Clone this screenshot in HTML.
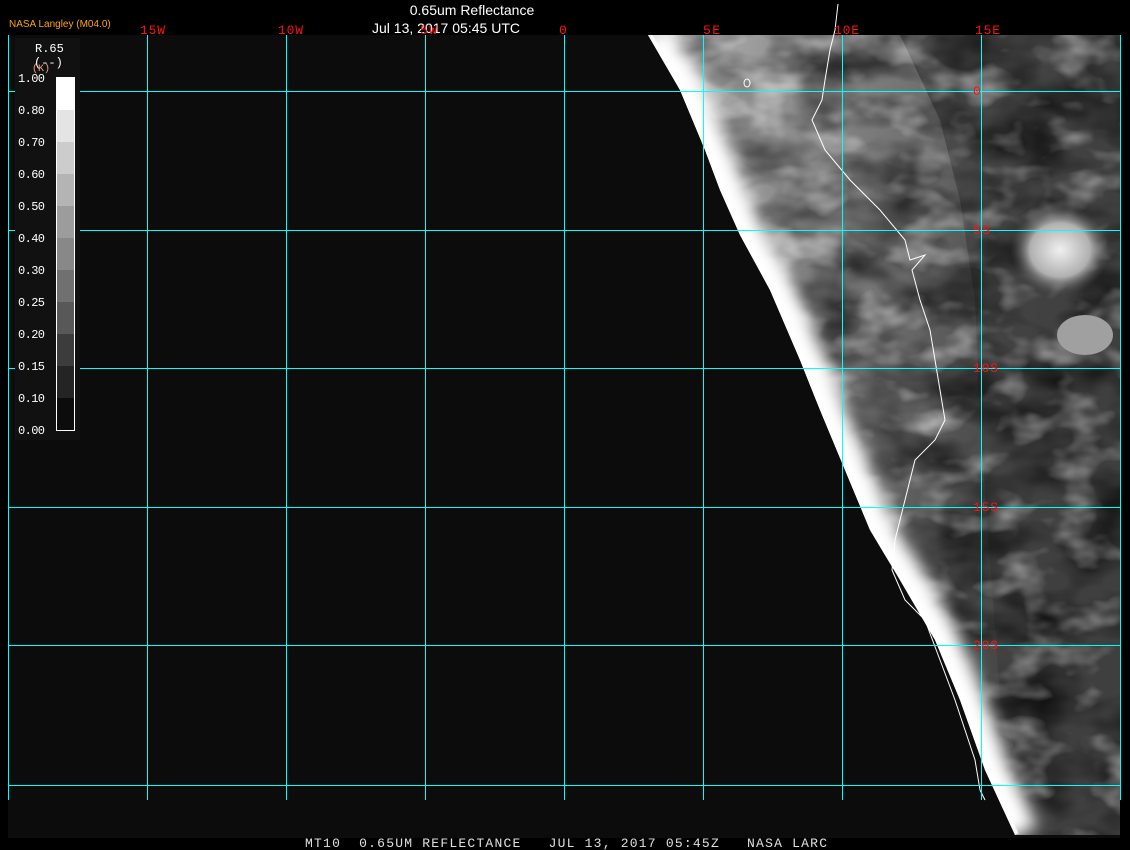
<!DOCTYPE html>
<html><head><meta charset="utf-8"><style>
html,body{margin:0;padding:0;background:#000;width:1130px;height:850px;overflow:hidden}
svg{display:block}
.m{font-family:"Liberation Mono","DejaVu Sans Mono",monospace}
</style></head><body>
<svg width="1130" height="850" viewBox="0 0 1130 850" xmlns="http://www.w3.org/2000/svg">
<defs>
<clipPath id="land"><polygon points="648,35 680,90 705,150 720,190 740,235 770,290 800,360 820,410 845,470 870,530 900,580 935,640 960,700 985,770 1015,835 1120,835 1120,35"/></clipPath>
<filter id="noise" x="0" y="0" width="100%" height="100%">
<feTurbulence type="fractalNoise" baseFrequency="0.015 0.025" numOctaves="3" seed="3"/>
<feColorMatrix type="matrix" values="0 0 0 0 0  0 0 0 0 0  0 0 0 0 0  1.3 0 0 0 -0.45"/>
</filter>
<filter id="noiseW" x="0" y="0" width="100%" height="100%">
<feTurbulence type="fractalNoise" baseFrequency="0.02 0.03" numOctaves="3" seed="11"/>
<feColorMatrix type="matrix" values="0 0 0 0 1  0 0 0 0 1  0 0 0 0 1  1.2 0 0 0 -0.6"/>
</filter>
<filter id="bl"><feGaussianBlur stdDeviation="8"/></filter>
<linearGradient id="band" x1="0" y1="0" x2="1" y2="0.25">
<stop offset="0" stop-color="#e0e0e0"/>
<stop offset="0.1" stop-color="#b0b0b0"/>
<stop offset="0.3" stop-color="#909090"/>
<stop offset="0.55" stop-color="#727272"/>
<stop offset="0.75" stop-color="#505050"/>
<stop offset="1" stop-color="#404040"/>
</linearGradient>
<radialGradient id="cl" cx="0.5" cy="0.5" r="0.5">
<stop offset="0" stop-color="#f0f0f0"/><stop offset="0.6" stop-color="#b0b0b0"/><stop offset="1" stop-color="#555" stop-opacity="0"/>
</radialGradient>
</defs>
<rect x="8" y="35" width="1112" height="803" fill="#0c0c0c"/>
<g clip-path="url(#land)">
<rect x="640" y="35" width="480" height="800" fill="url(#band)"/>
<polygon points="900,35 1120,35 1120,835 1040,835 1000,700 990,560 980,420 975,300 960,200 940,120" fill="#3e3e3e" opacity="0.7"/>
<rect x="640" y="35" width="480" height="800" filter="url(#noise)"/>
<rect x="640" y="35" width="480" height="800" filter="url(#noiseW)"/>
<polyline points="648,35 680,90 705,150 720,190 740,235 770,290 800,360 820,410 845,470 870,530 900,580 935,640 960,700 985,770 1015,835" fill="none" stroke="#fff" stroke-width="40" filter="url(#bl)" transform="translate(4,0)"/>
<polyline points="648,35 680,90 705,150 720,190 740,235 770,290 800,360 820,410 845,470 870,530 900,580 935,640 960,700 985,770 1015,835" fill="none" stroke="#fff" stroke-width="8" opacity="0.8"/>
<ellipse cx="1060" cy="250" rx="50" ry="45" fill="url(#cl)"/>
<ellipse cx="1085" cy="335" rx="28" ry="20" fill="#a0a0a0"/>
</g>
<polyline points="838,4 835,30 830,50 825,80 822,100 812,120 825,150 850,180 880,210 905,240 910,260 925,255 912,270 920,300 930,330 935,360 940,390 945,420 935,440 915,460 905,500 895,540 892,570 905,600 925,620 940,660 955,700 965,730 975,760 980,790 985,800" fill="none" stroke="#fff" stroke-width="1"/>
<ellipse cx="747" cy="83" rx="3" ry="4" fill="none" stroke="#fff"/>
<g stroke="#00ffff" stroke-width="1">
<line x1="8.5" y1="35" x2="8.5" y2="800"/><line x1="147.5" y1="35" x2="147.5" y2="800"/>
<line x1="286.5" y1="35" x2="286.5" y2="800"/><line x1="425.5" y1="35" x2="425.5" y2="800"/>
<line x1="564.5" y1="35" x2="564.5" y2="800"/><line x1="703.5" y1="35" x2="703.5" y2="800"/>
<line x1="842.5" y1="35" x2="842.5" y2="800"/><line x1="981.5" y1="35" x2="981.5" y2="800"/>
<line x1="1120.5" y1="35" x2="1120.5" y2="800"/>
<line x1="8" y1="91.5" x2="1120" y2="91.5"/><line x1="8" y1="230.5" x2="1120" y2="230.5"/>
<line x1="8" y1="368.5" x2="1120" y2="368.5"/><line x1="8" y1="507.5" x2="1120" y2="507.5"/>
<line x1="8" y1="645.5" x2="1120" y2="645.5"/><line x1="8" y1="785.5" x2="1120" y2="785.5"/>
</g>
<rect x="1121" y="35" width="9" height="815" fill="#000"/>
<rect x="0" y="838" width="1130" height="12" fill="#000"/>
<rect x="15" y="38" width="65" height="402" fill="#111"/>
<g>
<rect x="56" y="77" width="18" height="33" fill="#fff"/>
<rect x="56" y="110" width="18" height="32" fill="#e4e4e4"/>
<rect x="56" y="142" width="18" height="32" fill="#cccccc"/>
<rect x="56" y="174" width="18" height="32" fill="#b4b4b4"/>
<rect x="56" y="206" width="18" height="32" fill="#9c9c9c"/>
<rect x="56" y="238" width="18" height="32" fill="#888"/>
<rect x="56" y="270" width="18" height="32" fill="#707070"/>
<rect x="56" y="302" width="18" height="32" fill="#585858"/>
<rect x="56" y="334" width="18" height="32" fill="#3c3c3c"/>
<rect x="56" y="366" width="18" height="32" fill="#242424"/>
<rect x="56" y="398" width="18" height="32" fill="#0c0c0c"/>
<rect x="56.5" y="77.5" width="18" height="353" fill="none" stroke="#fff"/>
</g>
<g class="m" fill="#fff" font-size="12">
<text x="35" y="52">R.65</text>
<text x="34" y="66">(--)</text>
<text x="18" y="82" textLength="27">1.00</text><text x="18" y="114" textLength="27">0.80</text><text x="18" y="146" textLength="27">0.70</text>
<text x="18" y="178" textLength="27">0.60</text><text x="18" y="210" textLength="27">0.50</text><text x="18" y="242" textLength="27">0.40</text>
<text x="18" y="274" textLength="27">0.30</text><text x="18" y="306" textLength="27">0.25</text><text x="18" y="338" textLength="27">0.20</text>
<text x="18" y="370" textLength="27">0.15</text><text x="18" y="402" textLength="27">0.10</text><text x="18" y="434" textLength="27">0.00</text>
</g>
<text x="32" y="71" class="m" font-size="10" fill="#f0a080">(K)</text>
<text x="472" y="15" text-anchor="middle" font-family="Liberation Sans,sans-serif" font-size="14" fill="#fff">0.65um Reflectance</text>
<text x="446" y="33" text-anchor="middle" font-family="Liberation Sans,sans-serif" font-size="14" fill="#fff" textLength="148">Jul 13, 2017 05:45 UTC</text>
<text x="9" y="27" font-family="Liberation Sans,sans-serif" font-size="10" fill="#ffa500">NASA Langley (M04.0)</text>
<g class="m" fill="#ff1010" font-size="13">
<text x="140" y="34" textLength="25">15W</text><text x="278" y="34" textLength="25">10W</text><text x="420" y="34" textLength="17">5W</text>
<text x="559" y="34">0</text><text x="703" y="34" textLength="17">5E</text><text x="834" y="34" textLength="25">10E</text><text x="975" y="34" textLength="25">15E</text>
<text x="973" y="95">0</text><text x="973" y="234" textLength="17">5S</text><text x="973" y="372" textLength="25">10S</text>
<text x="973" y="511" textLength="25">15S</text><text x="973" y="649" textLength="25">20S</text>
</g>
<text x="305" y="847" class="m" font-size="13" fill="#e0e0e0" textLength="522" xml:space="preserve">MT10  0.65UM REFLECTANCE   JUL 13, 2017 05:45Z   NASA LARC</text>
</svg>
</body></html>
